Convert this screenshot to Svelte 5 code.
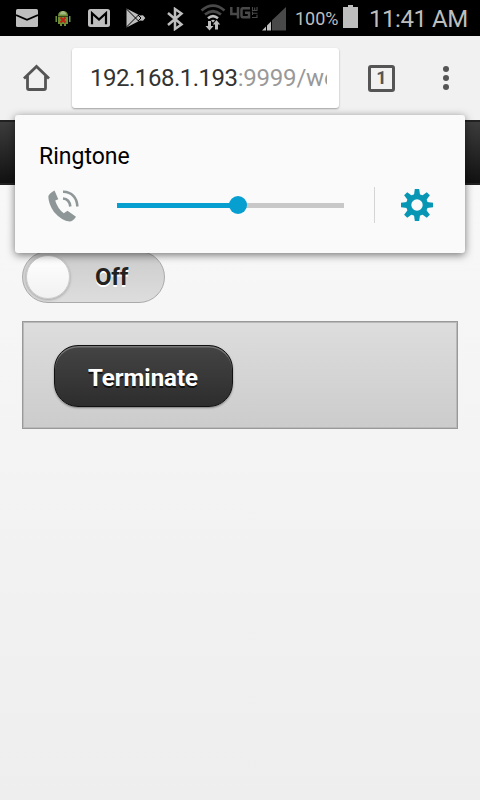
<script>
  let enabled = $state(false);
  let volume = $state(53.5);
  const address = { host: '192.168.1.193', rest: ':9999/webapp' };
</script>

<div class="screen">
  <header class="status">
    <div class="notices">
      <svg width="22" height="18" viewBox="0 0 22 18"><rect width="22" height="18" rx="1.5" fill="#bebebe" /><path d="M0 6 11 10.8 22 6" fill="none" stroke="#000" stroke-width="1.8" /></svg>
      <svg class="robot" width="16" height="17" viewBox="0 0 16 17">
        <path d="M3 6Q3 1 8 1T13 6ZM3 6.5H13V14H11V16H9V14H7V16H5V14H3ZM.5 6H2V12H.5ZM14 6H15.5V12H14Z" fill="#6b8e38" />
        <path d="M4.5 4.5Q6 1 8 1T11.5 4.5Z" fill="#a7b982" />
        <path d="m5.5 7.5 5 5m0-5-5 5" stroke="#c51b12" stroke-width="1.8" />
      </svg>
      <svg class="gmail" width="22" height="18" viewBox="0 0 22 18"><rect width="22" height="18" rx="2.5" fill="#bebebe" /><path d="M4 15.3V4.2L11 10.5 18 4.2V15.3" fill="none" stroke="#000" stroke-width="2.2" /></svg>
      <svg class="play" width="20" height="20" viewBox="0 0 20 20"><path d="M.5.5 14 7.5 17 7.3 19.3 10 17 12.7 14 12.5.5 19.5Z" fill="#bebebe" /><path d="M.5 1 13 13.5M.5 19 13 6.5M12 7l3 3-3 3" fill="none" stroke="#000" stroke-width="1" /></svg>
    </div>
    <div class="radios">
      <svg width="17" height="24" viewBox="0 0 17 24"><path d="m1 6 13.5 11.5L8 22V2L14.5 6.5 1 18" fill="none" stroke="#bebebe" stroke-width="2.5" /></svg>
      <svg class="wifi" width="26" height="27" viewBox="0 0 26 27">
        <path d="M1.5 6.5Q13-3.2 24.5 6.5M5 10.5Q13 4 21 10.5" fill="none" stroke="#494949" stroke-width="2.7" />
        <path d="M8 14.3Q13 10 18 14.3" fill="none" stroke="#bebebe" stroke-width="2.5" />
        <path d="M11 16.5Q13 15 15 16.5L13 18.5Z" fill="#bebebe" />
        <path d="M8 17h3v5h2.5l-4 4.5L5.5 22H8ZM15 25.5h3v-5h2.2L16.5 16 12.8 20.5H15Z" fill="#bebebe" />
      </svg>
      <svg class="network" width="28" height="14" viewBox="0 0 28 14"><path d="M1.3 0V7H9M8 0V11.5M20 1.3H13Q11.5 1.3 11.5 3V8.5Q11.5 10.2 13 10.2H19V5.7H15" fill="none" stroke="#494949" stroke-width="2.5" /><path d="M22.5 0V3.5H27V0M24.7 .5V3.5M22.5 4.5V8M22.5 6.2H27.5M22 10.5H27V7.8" fill="none" stroke="#494949" stroke-width="1.1" /></svg>
      <svg class="signal" width="25" height="24" viewBox="0 0 25 24"><path d="M24 0V23.5H10V13.3Z" fill="#494949" /><path d="M0 23.5 4 19.5V23.5ZM5 18.5 9 14.5V23.5H5Z" fill="#bebebe" /></svg>
    </div>
    <span class="percent">100%</span>
    <svg class="battery" width="15" height="23" viewBox="0 0 15 23"><path d="M5 0H10V2H15V23H0V2H5Z" fill="#bebebe" /></svg>
    <span class="clock">11:41 AM</span>
  </header>

  <nav class="toolbar">
    <svg class="home" width="27" height="27" viewBox="0 0 27 27"><path d="M1 14.5 13.5 2.5 26 14.5M4.5 12V24Q4.5 25.5 6 25.5H21Q22.5 25.5 22.5 24V12" fill="none" stroke="#555" stroke-width="2.8" /></svg>
    <div class="address"><div class="url"><span>{address.host}</span>{address.rest}</div></div>
    <div class="tabs">1</div>
    <svg class="more" width="6" height="24" viewBox="0 0 6 24" fill="#555"><circle cx="3" cy="3" r="3" /><circle cx="3" cy="12" r="3" /><circle cx="3" cy="21" r="3" /></svg>
  </nav>

  <main>
    <div class="titlebar"></div>
    <div class="content">
      <button class="switch" class:on={enabled} onclick={() => (enabled = !enabled)}>
        <i></i><span>{enabled ? 'On' : 'Off'}</span>
      </button>
      <section><button class="terminate">Terminate</button></section>
    </div>
  </main>

  <aside class="volume">
    <h2>Ringtone</h2>
    <div class="controls">
      <svg class="phone" width="32" height="32" viewBox="0 0 32 32">
        <path d="M6.5.5 10.3 9.2 7.2 10.5Q9.5 18.5 15.8 23.3L19.5 20.8 28 26.8Q25 31.5 21.5 31.5 14 31 6 22 .5 14 .3 6.5 1 3.5 6.5.5Z" fill="#8e9697" />
        <path d="M15 1.7C23.5 1.5 29.3 8 29.3 16.5M15 8.5Q21.5 9 22.3 16.5" fill="none" stroke="#8e9697" stroke-width="2.6" />
      </svg>
      <div class="slider"><div class="level" style:width="{volume}%"><i></i></div></div>
      <div class="divider"></div>
      <svg class="gear" width="32" height="32" viewBox="-16 -16 32 32">
        <g fill="#0796b4">
          {#each [0, 45, 90, 135, 180, 225, 270, 315] as angle}
            <path d="M-2.2-16H2.2L3.3-8H-3.3Z" transform="rotate({angle})" />
          {/each}
        </g>
        <circle r="8.3" fill="none" stroke="#0796b4" stroke-width="5.2" />
      </svg>
    </div>
  </aside>
</div>

<style>
  :global(body) { margin: 0; }
  .screen { position: relative; display: flex; flex-direction: column; width: 480px; height: 800px; overflow: hidden; font-family: Roboto, sans-serif; background: #f1f1f1; }
  svg { display: block; flex: none; }
  .status { display: flex; height: 36px; flex: none; background: #000; color: #bebebe; box-sizing: border-box; padding-left: 16px; white-space: nowrap; }
  .notices { display: flex; width: 151px; padding-top: 9px; box-sizing: border-box; }
  .robot { margin: 1px 0 0 17px; }
  .gmail { margin-left: 17px; }
  .play { margin: -1px 0 0 16px; }
  .radios { display: flex; width: 128px; padding-top: 7px; box-sizing: border-box; }
  .wifi { margin: -3px 0 0 16px; }
  .network { margin-left: 4px; }
  .signal { margin-left: 4px; }
  .percent { width: 48px; font-size: 18px; line-height: 37px; }
  .battery { margin-top: 5px; }
  .clock { margin-left: 11px; font-size: 24px; line-height: 38px; letter-spacing: -.45px; }
  .toolbar { display: flex; height: 84px; flex: none; background: #f1f1f1; }
  .home { margin: 28px 0 0 23px; }
  .address { width: 267px; height: 60px; box-sizing: border-box; margin: 12px 1px 0 22px; padding: 0 12px 0 18px; border-radius: 3px; background: #fff; box-shadow: 0 1px 2px #0005; }
  .url { overflow: hidden; white-space: nowrap; font-size: 24px; line-height: 61px; letter-spacing: -.2px; color: #999; }
  .url span { color: #333; letter-spacing: -.48px; }
  .tabs { width: 27px; height: 27px; box-sizing: border-box; margin: 29px 0 0 28px; border: 3px solid #555; border-radius: 3px; color: #555; font-size: 18px; font-weight: 700; line-height: 20px; text-align: center; }
  .more { margin: 30px 0 0 48px; }
  main { display: flex; flex: 1; flex-direction: column; background: linear-gradient(#f9f9f9, #eee); }
  .titlebar { height: 65px; box-sizing: border-box; border: solid #222; border-width: 2px 0; background: linear-gradient(#3c3c3c, #111); }
  .content { padding: 66px 22px 0; }
  button { display: block; padding: 0; font: 700 24px/1 Roboto, sans-serif; }
  .switch { display: flex; align-items: center; width: 143px; height: 52px; border: 1px solid #aaa; border-radius: 26px; background: linear-gradient(#ccc, #ddd); color: #222; text-shadow: 0 1.5px 0 #fff; }
  .switch i { width: 42px; height: 42px; margin-left: 3px; border: 1px solid #ccc; border-radius: 50%; background: linear-gradient(#fff, #f1f1f1); box-shadow: 0 1px 3px #0004; }
  .switch span { margin: 0 0 1px 25px; letter-spacing: -.2px; }
  .switch.on { background: #5393c5; }
  section { height: 108px; box-sizing: border-box; margin-top: 18px; padding: 23px 30.5px; border: 1px solid #999; box-shadow: inset 0 0 0 1px #b9b9b9; background: linear-gradient(#ddd, #ccc); }
  .terminate { width: 179px; height: 62px; border: 1px solid #111; border-radius: 24px; background: linear-gradient(#444, #2d2d2d); box-shadow: inset 0 1.5px 0 #777, 0 1px 2px #0006; color: #fff; line-height: 64px; text-shadow: 0 1.5px 0 #111; }
  .volume { position: absolute; left: 15px; top: 115px; width: 450px; height: 138px; box-sizing: border-box; border-radius: 3px; background: #fafafa; box-shadow: 0 2px 8px #0008; padding: 27px 0 0 24px; }
  h2 { margin: 0; font-size: 23px; font-weight: 400; line-height: 29px; color: #000; }
  .controls { display: flex; align-items: center; height: 36px; margin-top: 16px; }
  .phone { margin: 2px 0 0 9px; }
  .slider { width: 227px; height: 5px; margin-left: 37px; background: #c8c8c8; }
  .level { position: relative; height: 100%; background: #079ed0; }
  .level i { position: absolute; right: -9px; top: -7px; width: 18px; height: 18px; border-radius: 50%; background: #079ed0; }
  .divider { width: 1px; height: 36px; margin-left: 30px; background: #d5d5d5; }
  .gear { margin-left: 26px; }
</style>
